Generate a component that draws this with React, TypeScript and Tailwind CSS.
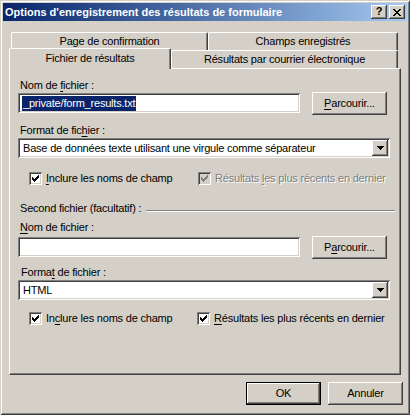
const raised =
  "shadow-[inset_-1px_-1px_#404040,inset_1px_1px_#ffffff,inset_-2px_-2px_#808080,inset_2px_2px_#d4d0c8]";
const sunken =
  "shadow-[inset_1px_1px_#808080,inset_-1px_-1px_#ffffff,inset_2px_2px_#404040,inset_-2px_-2px_#d4d0c8]";

function U({ children }: { children: React.ReactNode }) {
  return <span className="underline underline-offset-2">{children}</span>;
}

function Check({ disabled = false }: { disabled?: boolean }) {
  return (
    <span
      className={`relative block h-[13px] w-[13px] shrink-0 ${
        disabled ? "bg-[#d4d0c8]" : "bg-white"
      } ${sunken}`}
    >
      <svg
        className="absolute left-[3px] top-[3px]"
        width="7"
        height="7"
        viewBox="0 0 7 7"
        shapeRendering="crispEdges"
      >
        <path
          fill={disabled ? "#808080" : "#000000"}
          d="M6 0h1v1H6z M5 1h2v1H5z M0 2h1v1H0z M4 2h3v1H4z M0 3h2v1H0z M3 3h3v1H3z M0 4h5v1H0z M1 5h3v1H1z M2 6h1v1H2z"
        />
      </svg>
    </span>
  );
}

function Button({
  children,
  isDefault = false,
}: {
  children: React.ReactNode;
  isDefault?: boolean;
}) {
  if (isDefault) {
    return (
      <div className="h-[23px] w-[75px] border border-black bg-[#d4d0c8]">
        <div className={`flex h-full w-full items-center justify-center ${raised}`}>
          {children}
        </div>
      </div>
    );
  }
  return (
    <div
      className={`flex h-[23px] w-[75px] items-center justify-center bg-[#d4d0c8] ${raised}`}
    >
      {children}
    </div>
  );
}

function TextField({ children }: { children?: React.ReactNode }) {
  return (
    <div
      className={`mt-[1px] flex h-[20px] w-[282px] items-center bg-white pl-[4px] ${sunken}`}
    >
      {children}
    </div>
  );
}

function Select({ value }: { value: string }) {
  return (
    <div
      className={`mt-[1px] flex h-[20px] w-[372px] items-center bg-white p-[2px] ${sunken}`}
    >
      <span className="flex-1 pl-[3px]">{value}</span>
      <div
        className={`flex h-[16px] w-[16px] items-center justify-center bg-[#d4d0c8] ${raised}`}
      >
        <svg width="7" height="4" viewBox="0 0 7 4" shapeRendering="crispEdges">
          <path fill="#000" d="M0 0h7v1H0z M1 1h5v1H1z M2 2h3v1H2z M3 3h1v1H3z" />
        </svg>
      </div>
    </div>
  );
}

function Label({ children, indent = "ml-[2px]" }: { children: React.ReactNode; indent?: string }) {
  return <div className={`h-[13px] leading-[13px] ${indent}`}>{children}</div>;
}

function Tab({
  children,
  width,
}: {
  children: React.ReactNode;
  width: string;
}) {
  return (
    <div
      className={`flex h-[18px] items-center justify-center rounded-t-[2px] border-l border-t border-r border-l-white border-t-white border-r-[#404040] shadow-[inset_-1px_0_#808080] ${width}`}
    >
      {children}
    </div>
  );
}

export default function App() {
  return (
    <div className="h-[415px] w-[410px] bg-[#d4d0c8] p-[3px] font-['Liberation_Sans',Arial,sans-serif] text-[11px] tracking-[-0.2px] text-black shadow-[inset_1px_1px_#d4d0c8,inset_-1px_-1px_#404040,inset_2px_2px_#ffffff,inset_-2px_-2px_#808080]">
      {/* title bar */}
      <div className="flex h-[18px] items-center bg-linear-to-r from-[#0a246a] to-[#a6caf0] pl-[2px] pr-[2px]">
        <span className="flex-1 font-bold tracking-normal text-white">
          Options d'enregistrement des résultats de formulaire
        </span>
        <div
          className={`flex h-[14px] w-[16px] items-center justify-center bg-[#d4d0c8] pb-[1px] text-[11px] font-bold leading-none ${raised}`}
        >
          ?
        </div>
        <div
          className={`ml-[2px] flex h-[14px] w-[16px] items-center justify-center bg-[#d4d0c8] ${raised}`}
        >
          <svg width="8" height="7" viewBox="0 0 8 7" shapeRendering="crispEdges">
            <path
              fill="#000"
              d="M0 0h2v1H0z M6 0h2v1H6z M1 1h2v1H1z M5 1h2v1H5z M2 2h4v1H2z M3 3h2v1H3z M2 4h4v1H2z M1 5h2v1H1z M5 5h2v1H5z M0 6h2v1H0z M6 6h2v1H6z"
            />
          </svg>
        </div>
      </div>

      <div className="mt-[11px] pl-[6px]">
        {/* back row of tabs */}
        <div className="flex pl-[2px]">
          <Tab width="w-[197px]">Page de confirmation</Tab>
          <Tab width="w-[190px]">Champs enregistrés</Tab>
        </div>
        {/* front row of tabs */}
        <div className="flex h-[18px]">
          <div className="relative z-10 -mt-[2px] h-[21px] w-[162px] rounded-t-[2px] border-l border-t border-r border-l-white border-t-white border-r-[#404040] bg-[#d4d0c8] shadow-[inset_-1px_0_#808080]">
            <div className="flex h-[18px] items-center justify-center">
              Fichier de résultats
            </div>
          </div>
          <Tab width="w-[227px]">Résultats par courrier électronique</Tab>
        </div>

        {/* panel */}
        <div className="h-[307px] w-[392px] border border-t-white border-l-white border-r-[#404040] border-b-[#404040] pl-[8px] shadow-[inset_-1px_-1px_#808080]">
          <div className="mt-[10px]">
            <Label>
              Nom de <U>f</U>ichier :
            </Label>
          </div>
          <div className="flex items-start">
            <TextField>
              <span className="bg-[#0a246a] px-[1px] leading-[15px] text-white">
                _private/form_results.txt
              </span>
            </TextField>
            <div className="ml-[12px]">
              <Button>
                <span>
                  <U>P</U>arcourir...
                </span>
              </Button>
            </div>
          </div>

          <div className="mt-[9px]">
            <Label>
              Format de fic<U>h</U>ier :
            </Label>
          </div>
          <Select value="Base de données texte utilisant une virgule comme séparateur" />

          <div className="mt-[14px] flex h-[13px] items-center pl-[11px]">
            <div className="flex w-[169px] items-center gap-[4px]">
              <Check />
              <span>
                <U>I</U>nclure les noms de champ
              </span>
            </div>
            <div className="flex items-center gap-[4px]">
              <Check disabled />
              <span className="text-[#808080] [text-shadow:1px_1px_0_#ffffff]">
                Résultats <U>l</U>es plus récents en dernier
              </span>
            </div>
          </div>

          <div className="mt-[17px] flex h-[13px] items-center pr-[5px]">
            <Label>Second fichier (facultatif) :</Label>
            <div className="ml-[5px] mt-[4px] h-[2px] flex-1 border-t border-b border-t-[#808080] border-b-white" />
          </div>

          <div className="mt-[6px]">
            <Label>
              <U>N</U>om de fichier :
            </Label>
          </div>
          <div className="mt-[2px] flex items-start">
            <TextField />
            <div className="ml-[12px]">
              <Button>
                <span>
                  P<U>a</U>rcourir...
                </span>
              </Button>
            </div>
          </div>

          <div className="mt-[7px]">
            <Label indent="ml-[3px]">
              Forma<U>t</U> de fichier :
            </Label>
          </div>
          <Select value="HTML" />

          <div className="mt-[12px] flex h-[13px] items-center pl-[11px]">
            <div className="flex w-[168px] items-center gap-[4px]">
              <Check />
              <span>
                In<U>c</U>lure les noms de champ
              </span>
            </div>
            <div className="flex items-center gap-[4px]">
              <Check />
              <span>
                <U>R</U>ésultats les plus récents en dernier
              </span>
            </div>
          </div>
        </div>

        {/* dialog buttons */}
        <div className="mt-[7px] flex justify-end gap-[7px] pr-[4px]">
          <Button isDefault>OK</Button>
          <Button>Annuler</Button>
        </div>
      </div>
    </div>
  );
}
